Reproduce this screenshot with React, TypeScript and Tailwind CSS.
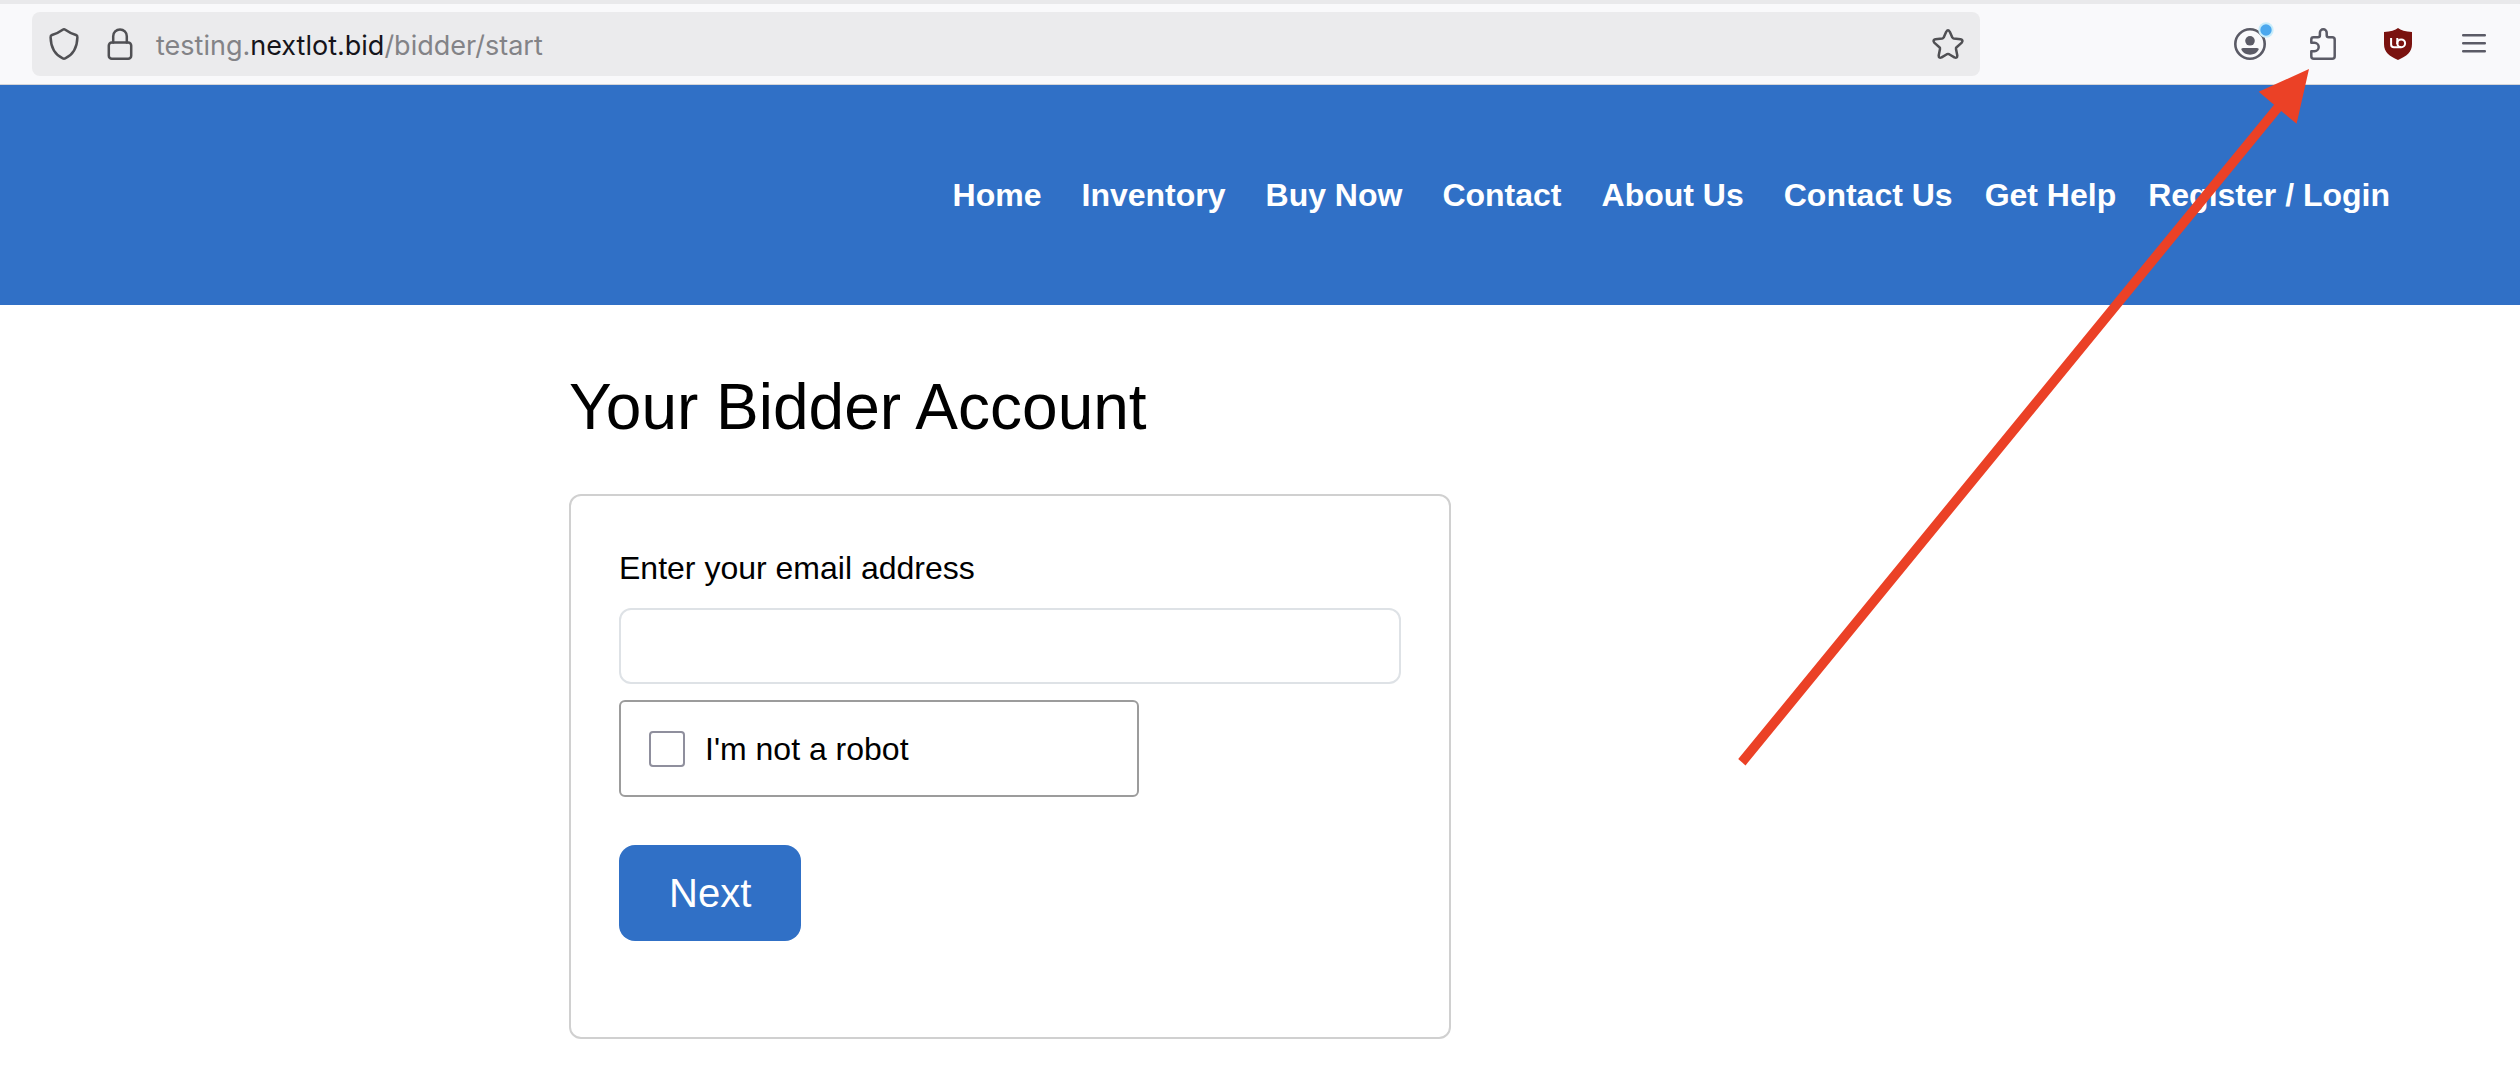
import type { ReactNode } from "react";

const NAV_LINKS = [
  { label: "Home", href: "#home" },
  { label: "Inventory", href: "#inventory" },
  { label: "Buy Now", href: "#buy-now" },
  { label: "Contact", href: "#contact" },
  { label: "About Us", href: "#about" },
  { label: "Contact Us", href: "#contact-us" },
];

const ACCOUNT_LINKS = [
  { label: "Get Help", href: "#help" },
  { label: "Register / Login", href: "#login" },
];

function Icon({ children }: { children: ReactNode }) {
  return (
    <svg
      viewBox="0 0 32 32"
      className="size-8 overflow-visible"
      fill="none"
      stroke="currentColor"
      strokeWidth="2.5"
      strokeLinecap="round"
      strokeLinejoin="round"
      aria-hidden="true"
    >
      {children}
    </svg>
  );
}

function BrowserToolbar() {
  return (
    <div className="flex items-center border-t-4 border-b border-t-[#e9e9eb] border-b-[#d5d5d8] bg-[#f9f9fb] py-2 pr-8 pl-8 text-[#5b5b66]">
      <div className="mr-[254px] flex h-16 min-w-0 flex-1 items-center rounded-lg bg-[#ebebed] px-4 text-[#505054]">
        <button type="button" aria-label="Tracking protection">
          <Icon>
            <path d="M16 1.3 Q16.7 1.3 17.3 1.7 Q21.5 4.8 28 7 Q29.5 7.6 29.4 9.2 C29.2 18.5 25.5 26.4 17.2 30.4 Q16 31 14.8 30.4 C6.5 26.4 2.8 18.5 2.6 9.2 Q2.5 7.6 4 7 Q10.5 4.8 14.7 1.7 Q15.3 1.3 16 1.3 Z" />
          </Icon>
        </button>
        <button type="button" className="ml-6" aria-label="Site information">
          <Icon>
            <path d="M9.2 14.5 V8.2 a6.8 6.8 0 0 1 13.6 0 V14.5" />
            <rect x="4.8" y="14.5" width="22.4" height="16.2" rx="3" />
          </Icon>
        </button>
        <div
          role="textbox"
          aria-label="Address"
          className="ml-5 flex-1 pt-1 font-[Inter,sans-serif] text-[27px] leading-8 text-[#838387]"
        >
          testing.<span className="text-[#15141a]">nextlot.bid</span>/bidder/start
        </div>
        <button type="button" aria-label="Bookmark this page">
          <Icon>
            <path d="M14.2 3.8 Q16 .8 17.8 3.8 L20.3 9.4 Q20.7 10.4 21.8 10.6 L28.6 11.3 Q31.6 12.1 29.8 14.6 L24.6 19.2 Q23.8 20 24 21 L25.3 27.4 Q25.3 30.6 22.4 29.4 L17.1 26.2 Q16 25.6 14.9 26.2 L9.6 29.4 Q6.7 30.6 6.7 27.4 L8 21 Q8.2 20 7.4 19.2 L2.2 14.6 Q.4 12.1 3.4 11.3 L10.2 10.6 Q11.3 10.4 11.7 9.4 Z" />
          </Icon>
        </button>
      </div>

      <div className="flex items-center gap-[42px]">
        <button type="button" aria-label="Account">
          <Icon>
            <circle cx="16" cy="16" r="14.7" strokeWidth="2.6" />
            <circle cx="16" cy="12.8" r="4.8" fill="currentColor" stroke="none" />
            <path
              d="M9 20 h14 q2.2 0 1.6 1.8 Q22 26.7 16 26.7 T7.4 21.8 Q6.8 20 9 20 Z"
              fill="currentColor"
              stroke="none"
            />
            <circle cx="32" cy="2" r="7.7" fill="#c9edfb" stroke="none" />
            <circle cx="32" cy="2" r="5.7" fill="#4ba8ee" stroke="none" />
          </Icon>
        </button>
        <button type="button" aria-label="Extensions">
          <Icon>
            <path d="M5.5 9.3 H9.9 Q11.9 9.3 11.9 7.3 V4.7 a3.4 3.4 0 0 1 6.8 0 V7.3 Q18.7 9.3 20.7 9.3 H24.2 a2.5 2.5 0 0 1 2.5 2.5 V28.2 a2.5 2.5 0 0 1 -2.5 2.5 H5.8 a2.5 2.5 0 0 1 -2.5 -2.5 V23.2 H6.5 a4.2 4.2 0 0 0 0 -8.4 H3.3 V11.5 Q3.3 9.3 5.5 9.3 Z" />
          </Icon>
        </button>
        <button type="button" aria-label="uBlock Origin">
          <Icon>
            <path
              d="M16 0 Q20 3.5 30 4 V16 C30 24.5 24.5 28 16 32 C7.5 28 2 24.5 2 16 V4 Q12 3.5 16 0 Z"
              fill="#7a120f"
              stroke="none"
            />
            <path
              d="M9.1 10 V16.4 q0 2.8 2.8 2.8 H19 M15.3 10 V16"
              stroke="#fff"
              strokeWidth="2"
              strokeLinecap="butt"
            />
            <circle cx="19.2" cy="15.3" r="3.9" stroke="#fff" strokeWidth="2" />
          </Icon>
        </button>
        <button type="button" aria-label="Open application menu">
          <Icon>
            <path d="M7.2 7.3 H28.8 M7.2 15.3 H28.8 M7.2 23.3 H28.8" />
          </Icon>
        </button>
      </div>
    </div>
  );
}

function SiteHeader() {
  return (
    <header className="flex h-[220px] items-center justify-end bg-[#3070c6] pr-[130px]">
      <nav className="flex items-center gap-8 text-[32px] leading-12 font-bold whitespace-nowrap text-white">
        <div className="flex gap-10">
          {NAV_LINKS.map((link) => (
            <a key={link.label} href={link.href}>
              {link.label}
            </a>
          ))}
        </div>
        {ACCOUNT_LINKS.map((link) => (
          <a key={link.label} href={link.href}>
            {link.label}
          </a>
        ))}
      </nav>
    </header>
  );
}

function BidderForm() {
  return (
    <form
      className="max-w-[882px] rounded-xl border-2 border-[#d0d0d0] px-12 pt-12 pb-24"
      onSubmit={(e) => e.preventDefault()}
    >
      <label htmlFor="email" className="block text-[32px] leading-12">
        Enter your email address
      </label>
      <input
        id="email"
        type="email"
        className="mt-4 block h-[76px] w-full rounded-xl border-2 border-[#dee2e6] px-6 text-[32px] outline-none"
      />
      <div className="mt-4 flex h-[97px] max-w-[520px] items-center rounded-md border-2 border-[#9c9c9c] px-7">
        <input
          id="robot"
          type="checkbox"
          className="size-9 appearance-none rounded-sm border-2 border-[#8f8f9d] bg-white checked:bg-[#3070c6]"
        />
        <label htmlFor="robot" className="pl-5 text-[32px] leading-12">
          I'm not a robot
        </label>
      </div>
      <button
        type="submit"
        className="mt-12 block h-24 rounded-2xl bg-[#3070c6] px-[50px] text-[40px] leading-12 text-white"
      >
        Next
      </button>
    </form>
  );
}

// Red pointer from the page up to the extensions button
function PointerArrow() {
  return (
    <svg
      viewBox="0 0 572 698"
      className="pointer-events-none absolute top-[69px] right-[210px] h-[698px] w-[572px]"
      fill="#eb4126"
      aria-hidden="true"
    >
      <path d="M571 0 L558.6 54.7 L543.2 42 L7.5 696.4 L0.2 690 L536 35.7 L520.7 22.7 Z" />
    </svg>
  );
}

export default function App() {
  return (
    <div className="relative min-h-screen bg-white font-['Liberation_Sans',Arial,sans-serif] text-black">
      <BrowserToolbar />
      <SiteHeader />
      <main className="mx-auto max-w-[1382px] pt-16">
        <h1 className="mb-12 text-[64px] leading-[77px]">Your Bidder Account</h1>
        <BidderForm />
      </main>
      <PointerArrow />
    </div>
  );
}
